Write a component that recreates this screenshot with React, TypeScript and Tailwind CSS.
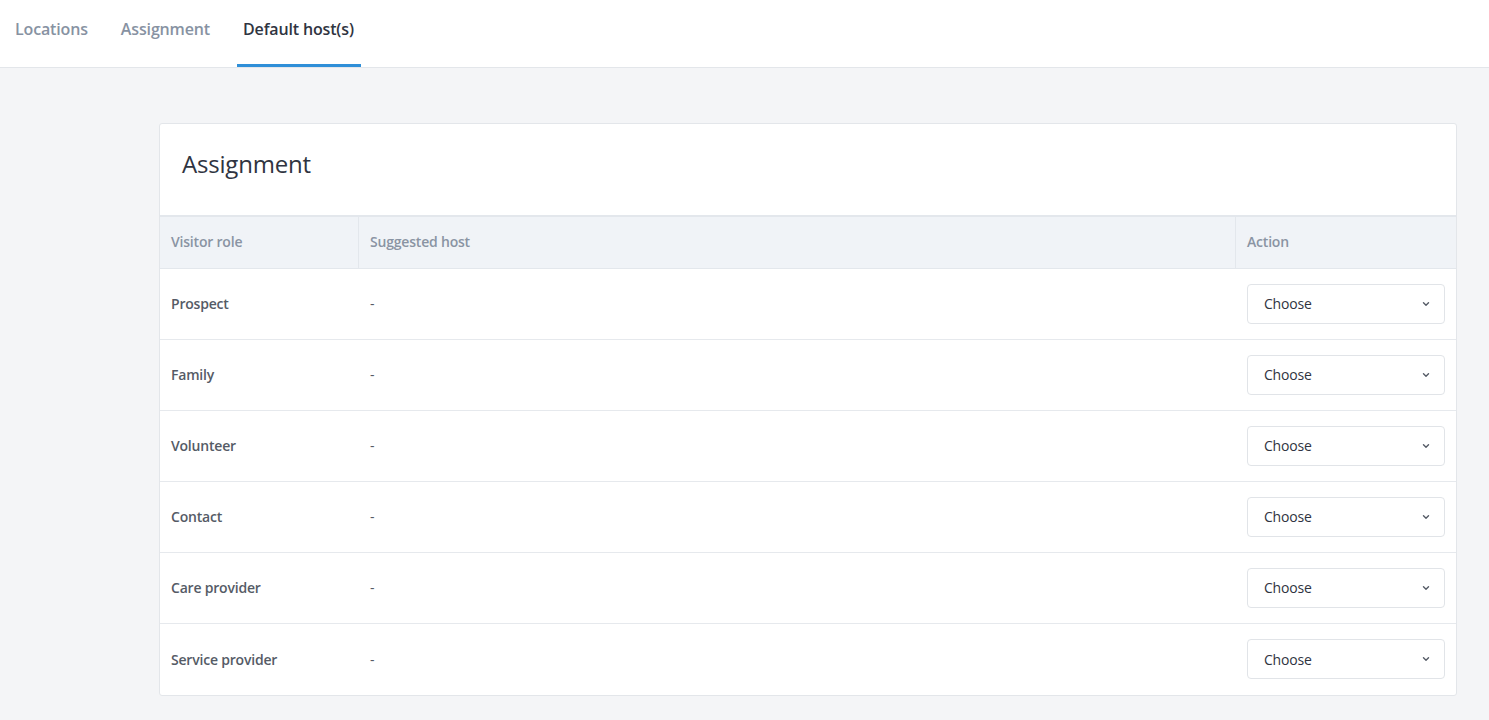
import React from "react";

const rows = ["Prospect", "Family", "Volunteer", "Contact", "Care provider", "Service provider"];

function Chevron() {
  return (
    <svg width="8" height="6" viewBox="0 0 8 6" fill="none" className="text-[#555b66]">
      <path d="M1.5 1.8 L4 4.2 L6.5 1.8" stroke="currentColor" strokeWidth="1.4" strokeLinecap="round" strokeLinejoin="round" />
    </svg>
  );
}

export default function App() {
  return (
    <div className="min-h-[720px] bg-[#f4f5f7] text-[#3a3f4a]" style={{ fontFamily: '"Open Sans", "Noto Sans", sans-serif' }}>
      <div className="h-[68px] bg-white border-b border-[#e3e6ea] flex items-end pl-[9px]">
        <div className="flex gap-[21px]">
          <div className="px-[6px] h-[67px] flex items-center pb-[9px] text-[16px] font-semibold text-[#8792a2] tracking-[-0.15px]">Locations</div>
          <div className="px-[6px] h-[67px] flex items-center pb-[9px] text-[16px] font-semibold text-[#8792a2] tracking-[-0.15px]">Assignment</div>
          <div className="pl-[6px] pr-[7px] h-[67px] flex items-center pb-[6px] text-[16px] font-semibold text-[#2f3441] tracking-[-0.15px] border-b-[3px] border-[#2f8fd8]">Default host(s)</div>
        </div>
      </div>
      <div className="pt-[55px] pl-[159px] pr-[32px] pb-[25px]">
        <div className="bg-white border border-[#e3e6ea] rounded-[3px]">
          <div className="h-[91px] flex items-center pl-[22px] pb-[12px] text-[24px] text-[#2f3441] tracking-[-0.2px]">Assignment</div>
          <div className="flex h-[54px] bg-[#f0f3f7] border-t-2 border-b border-[#e3e7ec] text-[14px] font-semibold text-[#8a94a3] tracking-[-0.2px]">
            <div className="w-[199px] pl-[11px] pb-[2px] flex items-center border-r border-[#e3e7ec]">Visitor role</div>
            <div className="flex-1 pl-[11px] pb-[2px] flex items-center border-r border-[#e3e7ec]">Suggested host</div>
            <div className="w-[220px] pl-[11px] pb-[2px] flex items-center">Action</div>
          </div>
          {rows.map((r, i) => (
            <div key={r} className={`flex h-[71px] items-center pb-[1px] ${i < rows.length - 1 ? "border-b border-[#e6e9ed]" : ""}`}>
              <div className="w-[199px] pl-[11px] text-[14px] font-semibold text-[#555b66] tracking-[-0.2px]">{r}</div>
              <div className="flex-1 pl-[11px] text-[14px] text-[#555b66]">-</div>
              <div className="w-[220px] pl-[11px]">
                <div className="w-[198px] h-[40px] border border-[#e1e4e8] rounded-[4px] flex items-center justify-between pl-[16px] pr-[14px] text-[14px] text-[#2f3441] tracking-[-0.2px]">
                  <span>Choose</span>
                  <Chevron />
                </div>
              </div>
            </div>
          ))}
        </div>
      </div>
    </div>
  );
}
